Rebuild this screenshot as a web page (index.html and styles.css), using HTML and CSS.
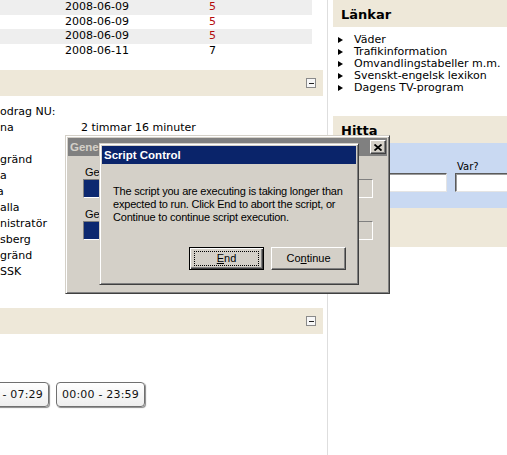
FILE: index.html
```html
<!DOCTYPE html>
<html lang="sv">
<head>
  <meta charset="UTF-8">
  <title>Startsida</title>
  <link rel="stylesheet" href="styles.css">
</head>
<body>

  <div class="page">
    <!-- Vänster kolumn -->
    <div class="main">
      <div class="log">
        <div class="log-row odd"><span></span><span>2008-06-09</span><span class="red">5</span></div>
        <div class="log-row"><span></span><span>2008-06-09</span><span class="red">5</span></div>
        <div class="log-row odd"><span></span><span>2008-06-09</span><span class="red">5</span></div>
        <div class="log-row"><span></span><span>2008-06-11</span><span>7</span></div>
      </div>

      <div class="box-head"><span class="toggle"></span></div>

      <div class="status">
        <div class="status-row"><span>odrag NU:</span><span></span></div>
        <div class="status-row"><span>na</span><span>2 timmar 16 minuter</span></div>
        <div class="status-row"><span></span><span></span></div>
        <div class="status-row"><span>gränd</span><span></span></div>
        <div class="status-row"><span>a</span><span></span></div>
        <div class="status-row"><span class="cut">a</span><span></span></div>
        <div class="status-row"><span>alla</span><span></span></div>
        <div class="status-row"><span>nistratör</span><span></span></div>
        <div class="status-row"><span>sberg</span><span></span></div>
        <div class="status-row"><span>gränd</span><span></span></div>
        <div class="status-row"><span>SSK</span><span></span></div>
      </div>

      <div class="box-head second"><span class="toggle"></span></div>

      <div class="times">
        <button class="time-btn first">00:00 - 07:29</button>
        <button class="time-btn">00:00 - 23:59</button>
      </div>
    </div>

    <!-- Höger kolumn -->
    <div class="side">
      <div class="side-head">Länkar</div>
      <ul class="links">
        <li>Väder</li>
        <li>Trafikinformation</li>
        <li>Omvandlingstabeller m.m.</li>
        <li>Svenskt-engelsk lexikon</li>
        <li>Dagens TV-program</li>
      </ul>

      <div class="find">
        <div class="side-head">Hitta</div>
        <div class="find-form">
          <label class="field"><span>Vad?</span><input type="text"></label>
          <label class="field"><span>Var?</span><input type="text"></label>
        </div>
      </div>
    </div>
  </div>

  <!-- Fönster som ligger över sidan -->
  <div class="win outer">
    <div class="win-title inactive">
      <span>Gene</span>
      <span class="close">
        <svg width="8" height="7" viewBox="0 0 8 7"><path d="M0.5 0.5 L7.5 6.5 M7.5 0.5 L0.5 6.5" stroke="#000" stroke-width="1.8"/></svg>
      </span>
    </div>
    <div class="win-body">
      <div class="prog-label">Ge</div>
      <div class="prog"><div class="prog-bar"></div></div>
      <div class="prog-label next">Ge</div>
      <div class="prog"><div class="prog-bar"></div></div>
    </div>
  </div>

  <div class="win alert">
    <div class="win-title">Script Control</div>
    <p class="alert-msg">The script you are executing is taking longer than<br>expected to run. Click End to abort the script, or<br>Continue to continue script execution.</p>
    <div class="alert-buttons">
      <button class="btn default"><span class="focus"><u>E</u>nd</span></button>
      <button class="btn"><span class="label">Co<u>n</u>tinue</span></button>
    </div>
  </div>

</body>
</html>
```

FILE: styles.css
```css
body {
  margin: 0;
  width: 507px;
  height: 455px;
  overflow: hidden;
  background: #fff;
  font-family: "DejaVu Sans", Verdana, sans-serif;
  font-size: 11px;
  color: #000;
}
.page {
  display: flex;
  height: 455px;
}
.main {
  width: 323px;
  flex: none;
}

/* tabell med datum */
.log-row {
  display: grid;
  grid-template-columns: 65px 144px 1fr;
  width: 312px;
  height: 14.5px;
  line-height: 14.5px;
}
.log-row.odd {
  background: #eeeeee;
}
.red {
  color: #b50d0d;
}

.box-head {
  height: 26px;
  margin-top: 12px;
  background: #eee8d9;
  display: flex;
  justify-content: flex-end;
  align-items: center;
  padding-right: 7px;
}
.box-head.second {
  margin-top: 28px;
}
.toggle {
  width: 10px;
  height: 10px;
  box-sizing: border-box;
  border: 1px solid #8a8a8a;
  background: #f7f7f7;
  display: flex;
  align-items: center;
  justify-content: center;
}
.toggle::before {
  content: "";
  width: 5px;
  height: 1px;
  background: #222;
}

.status {
  margin-top: 8px;
}
.status-row {
  display: grid;
  grid-template-columns: 81px 1fr;
  height: 16px;
  line-height: 16px;
  white-space: nowrap;
}
.cut {
  text-indent: -3px;
}

.times {
  margin-top: 48px;
  display: flex;
  gap: 7px;
}
.time-btn {
  width: 89px;
  height: 25px;
  padding: 0;
  flex: none;
  font-family: "DejaVu Sans", Verdana, sans-serif;
  font-size: 11px;
  letter-spacing: 0.2px;
  color: #111;
  border: 1px solid #707070;
  border-radius: 4px;
  background: linear-gradient(#ffffff, #eeeeee);
  box-shadow: 1px 1px 1px #8a8a8a;
}
.time-btn.first {
  margin-left: -40px;
}

/* högerspalt */
.side {
  width: 174px;
  flex: none;
  margin-left: 4px;
  padding-left: 5px;
  border-left: 1px solid #dedede;
  overflow: hidden;
}
.side-head {
  height: 27px;
  line-height: 29px;
  padding-left: 8px;
  background: #eee8d9;
  font-size: 13px;
  font-weight: bold;
}
.links {
  list-style: none;
  margin: 7px 0 0;
  padding: 0 0 0 5px;
}
.links li {
  display: flex;
  align-items: center;
  height: 12px;
  line-height: 12px;
  white-space: nowrap;
}
.links li::before {
  content: "";
  flex: none;
  width: 0;
  height: 0;
  border-left: 5px solid #000;
  border-top: 3.5px solid transparent;
  border-bottom: 3.5px solid transparent;
  margin-right: 11px;
}

.find {
  margin-top: 22px;
  background: #eee8d9;
  padding-bottom: 39px;
}
.find-form {
  background: #c9d9f2;
  padding: 18px 0 16px 7px;
  display: grid;
  grid-template-columns: 107px 107px;
  gap: 8px;
  width: 300px;
}
.field {
  display: flex;
  flex-direction: column;
}
.field span {
  height: 12px;
  line-height: 12px;
  font-size: 10px;
  padding-left: 2px;
}
.field input {
  height: 19px;
  box-sizing: border-box;
  margin: 0;
  padding: 0;
  background: #fff;
  border: 1px solid;
  border-color: #5a5a5a #e4e4e4 #e4e4e4 #5a5a5a;
  box-shadow: inset 1px 1px 0 #9a9a9a;
}

/* Windows-fönster */
.win {
  position: absolute;
  box-sizing: border-box;
  background: #d4d0c8;
  border: 1px solid;
  border-color: #d4d0c8 #404040 #404040 #d4d0c8;
  box-shadow: inset 1px 1px 0 #fff, inset -1px -1px 0 #808080;
  padding: 2px;
  font-family: "Liberation Sans", Arial, sans-serif;
  font-size: 11px;
}
.win-title {
  height: 18px;
  background: #0a246a;
  color: #fff;
  font-weight: bold;
  font-size: 11.5px;
  padding-left: 2px;
  display: flex;
  align-items: center;
  justify-content: space-between;
  white-space: nowrap;
}
.win-title.inactive {
  background: #808080;
  color: #d4d0c8;
  padding-right: 1px;
}
.close {
  width: 16px;
  height: 14px;
  box-sizing: border-box;
  background: #d4d0c8;
  border: 1px solid;
  border-color: #fff #404040 #404040 #fff;
  box-shadow: inset -1px -1px 0 #808080;
  display: flex;
  align-items: center;
  justify-content: center;
}

.outer {
  left: 65px;
  top: 135px;
  width: 325px;
  height: 159px;
}
.win-body {
  padding: 10px 14px 0 15px;
}
.prog-label {
  height: 12px;
  line-height: 12px;
  padding-left: 2px;
  white-space: nowrap;
}
.prog-label.next {
  margin-top: 10px;
}
.prog {
  height: 19px;
  margin-top: 1px;
  box-sizing: border-box;
  border: 1px solid;
  border-color: #808080 #fff #fff #808080;
}
.prog-bar {
  width: 40px;
  height: 100%;
  background: #0c2870;
}

.alert {
  left: 99px;
  top: 143px;
  width: 260px;
  height: 142px;
}
.alert-msg {
  margin: 0;
  padding: 21px 0 0 11px;
  line-height: 13px;
  letter-spacing: -0.2px;
  white-space: nowrap;
}
.alert-buttons {
  margin-top: 23px;
  display: flex;
  justify-content: flex-end;
  gap: 7px;
  padding-right: 10px;
}
.btn {
  width: 75px;
  height: 23px;
  box-sizing: border-box;
  padding: 0;
  background: #d4d0c8;
  border: 1px solid;
  border-color: #fff #404040 #404040 #fff;
  box-shadow: inset -1px -1px 0 #808080;
  font-family: "Liberation Sans", Arial, sans-serif;
  font-size: 11px;
  color: #000;
}
.btn.default {
  border: 1px solid #000;
  box-shadow: inset 1px 1px 0 #fff, inset -1px -1px 0 #404040, inset -2px -2px 0 #808080;
  padding: 3px 4px;
}
.focus {
  display: block;
  height: 15px;
  line-height: 13px;
  box-sizing: border-box;
  border: 1px dotted #000;
}
.label {
  line-height: 13px;
}
```
